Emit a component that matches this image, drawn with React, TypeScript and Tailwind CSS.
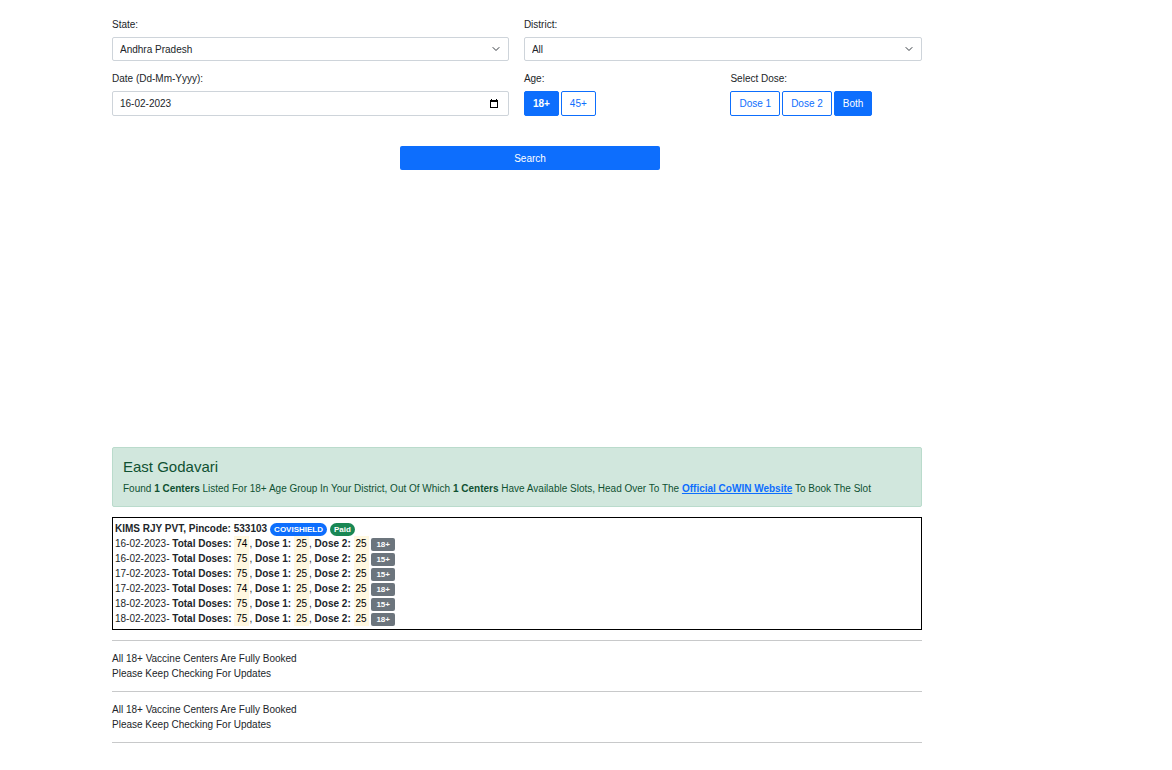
import { useState, ReactNode } from "react";
import clsx from "clsx";

interface Session {
  date: string;
  total: number;
  dose1: number;
  dose2: number;
  minAge: string;
}

interface SelectFieldProps {
  id: string;
  label: string;
  options: string[];
}

interface ToggleButtonProps {
  active: boolean;
  onClick: () => void;
  bold?: boolean;
  children: ReactNode;
}

const sessions: Session[] = [
  { date: "16-02-2023", total: 74, dose1: 25, dose2: 25, minAge: "18+" },
  { date: "16-02-2023", total: 75, dose1: 25, dose2: 25, minAge: "15+" },
  { date: "17-02-2023", total: 75, dose1: 25, dose2: 25, minAge: "15+" },
  { date: "17-02-2023", total: 74, dose1: 25, dose2: 25, minAge: "18+" },
  { date: "18-02-2023", total: 75, dose1: 25, dose2: 25, minAge: "15+" },
  { date: "18-02-2023", total: 75, dose1: 25, dose2: 25, minAge: "18+" },
];

const ages = ["18+", "45+"];
const doses = ["Dose 1", "Dose 2", "Both"];

function SelectField({ id, label, options }: SelectFieldProps) {
  return (
    <div>
      <label htmlFor={id} className="mb-[5px] block">
        {label}
      </label>
      <div className="grid items-center">
        <select
          id={id}
          className="col-start-1 row-start-1 h-6 w-full appearance-none rounded-xs border border-[#ced4da] bg-white px-[7px]"
        >
          {options.map((option) => (
            <option key={option}>{option}</option>
          ))}
        </select>
        <svg
          viewBox="0 0 16 16"
          className="pointer-events-none col-start-1 row-start-1 mr-[9px] size-2 justify-self-end"
          fill="none"
          stroke="#343a40"
          strokeWidth="2"
          strokeLinecap="round"
          strokeLinejoin="round"
        >
          <path d="m2 5 6 6 6-6" />
        </svg>
      </div>
    </div>
  );
}

function ToggleButton({ active, onClick, bold, children }: ToggleButtonProps) {
  return (
    <button
      type="button"
      aria-pressed={active}
      onClick={onClick}
      className={clsx(
        "h-[25px] rounded-xs border border-[#0d6efd] px-2",
        active ? "bg-[#0d6efd] text-white" : "bg-white text-[#0d6efd]",
        active && bold && "font-bold"
      )}
    >
      {children}
    </button>
  );
}

function Count({ children }: { children: ReactNode }) {
  return (
    <span className="inline-block bg-[#fff8e1] px-[2px] text-black">
      {children}
    </span>
  );
}

function SessionRow({ session }: { session: Session }) {
  return (
    <li className="flex items-center">
      <span className="whitespace-pre">
        {session.date}- <b>Total Doses: </b>
        <Count>{session.total}</Count>, <b>Dose 1: </b>
        <Count>{session.dose1}</Count>, <b>Dose 2: </b>
        <Count>{session.dose2}</Count>{" "}
      </span>
      <span className="mt-px rounded-xs bg-[#6c757d] px-[5px] text-[8px] leading-[13px] font-bold text-white">
        {session.minAge}
      </span>
    </li>
  );
}

function FullyBooked() {
  return (
    <div className="border-b border-[#c8c9ca] py-[10px]">
      <p>All 18+ Vaccine Centers Are Fully Booked</p>
      <p>Please Keep Checking For Updates</p>
    </div>
  );
}

export default function App() {
  const [age, setAge] = useState("18+");
  const [dose, setDose] = useState("Both");
  const [date, setDate] = useState("16-02-2023");

  return (
    <main className="bg-white pt-[17px] pr-[250px] pb-7 pl-28 font-['Liberation_Sans',Arial,sans-serif] text-[10px] leading-[15px] text-[#212529]">
      <form onSubmit={(event) => event.preventDefault()}>
        <div className="grid grid-cols-[49%_1fr] gap-x-[15px] gap-y-[10px]">
          <SelectField
            id="state"
            label="State:"
            options={["Andhra Pradesh", "Karnataka", "Telangana"]}
          />
          <SelectField
            id="district"
            label="District:"
            options={["All", "East Godavari", "West Godavari"]}
          />
          <div>
            <label htmlFor="date" className="mb-[5px] block">
              Date (Dd-Mm-Yyyy):
            </label>
            <div className="flex h-[25px] items-center rounded-xs border border-[#ced4da] px-[7px]">
              <input
                id="date"
                type="text"
                value={date}
                onChange={(event) => setDate(event.target.value)}
                className="min-w-0 flex-1 outline-none"
              />
              <button type="button" aria-label="Open calendar" className="mr-[3px]">
                <svg viewBox="0 0 8 9" className="h-[9px] w-2" fill="#000">
                  <path d="M0 1h1V0h1v1h4V0h1v1h1v8H0zM1 3v5h6V3z" />
                </svg>
              </button>
            </div>
          </div>
          <div className="grid grid-cols-2 gap-x-[15px]">
            <div role="group" aria-labelledby="age-label">
              <p id="age-label" className="mb-[5px]">
                Age:
              </p>
              <div className="flex gap-[2px]">
                {ages.map((item) => (
                  <ToggleButton
                    key={item}
                    bold
                    active={age === item}
                    onClick={() => setAge(item)}
                  >
                    {item}
                  </ToggleButton>
                ))}
              </div>
            </div>
            <div role="group" aria-labelledby="dose-label">
              <p id="dose-label" className="mb-[5px]">
                Select Dose:
              </p>
              <div className="flex gap-[2px]">
                {doses.map((item) => (
                  <ToggleButton
                    key={item}
                    active={dose === item}
                    onClick={() => setDose(item)}
                  >
                    {item}
                  </ToggleButton>
                ))}
              </div>
            </div>
          </div>
        </div>
        <button
          type="submit"
          className="mt-[30px] ml-72 block h-6 w-[260px] rounded-xs bg-[#0d6efd] text-white"
        >
          Search
        </button>
      </form>

      <section className="mt-[277px] rounded-xs border border-[#badbcc] bg-[#d1e7dd] p-[10px] text-[#0f5132]">
        <h4 className="mb-[5px] text-[15px] leading-[18px]">East Godavari</h4>
        <p>
          Found <b>1 Centers</b> Listed For 18+ Age Group In Your District, Out
          Of Which <b>1 Centers</b> Have Available Slots, Head Over To The{" "}
          <a
            href="https://www.cowin.gov.in/"
            className="font-bold text-[#0d6efd] underline"
          >
            Official CoWIN Website
          </a>{" "}
          To Book The Slot
        </p>
      </section>

      <section className="mt-[10px] border border-black px-[2px] py-[3px]">
        <div className="flex items-center gap-[3px]">
          <b>KIMS RJY PVT, Pincode: 533103</b>
          <span className="mt-px rounded-full bg-[#0d6efd] px-1 text-[8px] leading-[13px] font-bold text-white">
            COVISHIELD
          </span>
          <span className="mt-px rounded-full bg-[#198754] px-1 text-[8px] leading-[13px] font-bold text-white">
            Paid
          </span>
        </div>
        <ul>
          {sessions.map((session, index) => (
            <SessionRow key={index} session={session} />
          ))}
        </ul>
      </section>

      <div className="mt-[10px] border-t border-[#c8c9ca]">
        <FullyBooked />
        <FullyBooked />
      </div>
    </main>
  );
}
